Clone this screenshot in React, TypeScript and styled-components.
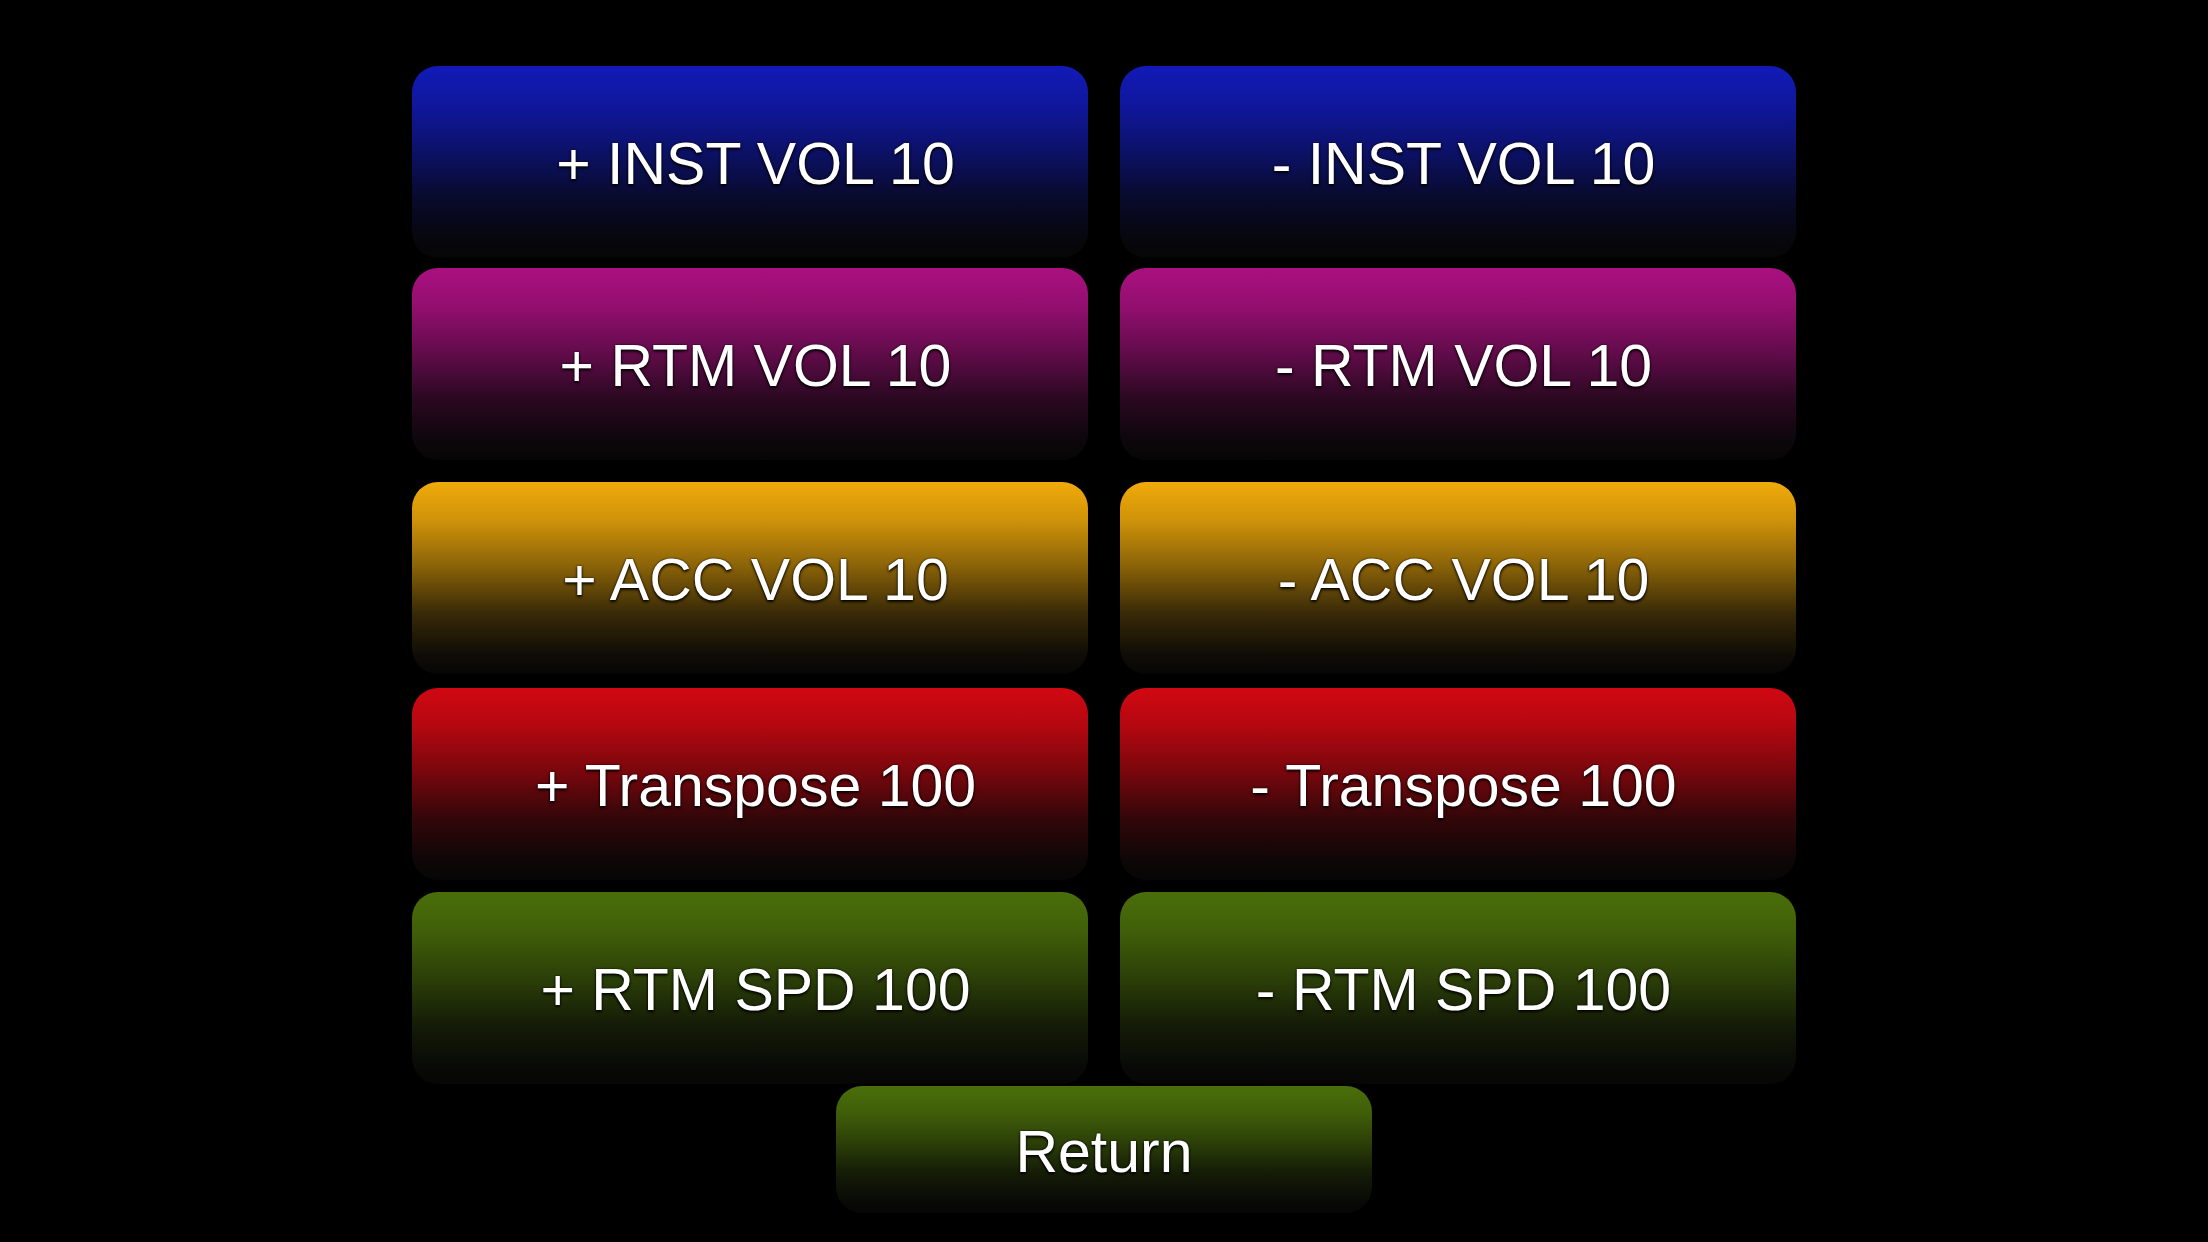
import React from "react";
import styled, { createGlobalStyle } from "styled-components";

const Global = createGlobalStyle`
  html, body {
    margin: 0;
    padding: 0;
    background: #000;
  }
  body {
    width: 2208px;
    height: 1242px;
    overflow: hidden;
    font-family: "Liberation Sans", Arial, Helvetica, sans-serif;
  }
`;

const Screen = styled.main`
  width: 2208px;
  height: 1242px;
  background: #000;
  display: flex;
  flex-direction: column;
  align-items: center;
  padding-top: 66px;
  box-sizing: border-box;
`;

const Row = styled.div<{ $gap: number }>`
  display: grid;
  grid-template-columns: 676px 676px;
  column-gap: 32px;
  margin-top: ${(p) => p.$gap}px;
`;

const Key = styled.button<{
  $rgb: string;
  $w?: number;
  $h?: number;
  $gap?: number;
  $indent?: number;
}>`
  width: ${(p) => (p.$w ? `${p.$w}px` : "100%")};
  height: ${(p) => p.$h ?? 192}px;
  margin-top: ${(p) => p.$gap ?? 0}px;
  border: none;
  border-radius: 26px;
  padding: 5px 0 0 ${(p) => p.$indent ?? 0}px;
  box-sizing: border-box;
  display: flex;
  align-items: center;
  justify-content: center;
  background-color: #060606;
  background-image: linear-gradient(
    to bottom,
    rgba(${(p) => p.$rgb}, 1) 0%,
    rgba(${(p) => p.$rgb}, 0.86) 20%,
    rgba(${(p) => p.$rgb}, 0.55) 45%,
    rgba(${(p) => p.$rgb}, 0.22) 68%,
    rgba(${(p) => p.$rgb}, 0.04) 90%,
    rgba(${(p) => p.$rgb}, 0) 100%
  );
  box-shadow: 0 4px 8px rgba(0, 0, 0, 0.6);
  color: #fff;
  font-family: "Liberation Sans", Arial, Helvetica, sans-serif;
  font-size: 59px;
  font-weight: 400;
  line-height: 1;
  white-space: pre;
  text-shadow: 0 0 2px rgba(0, 0, 0, 0.95), 0 2px 3px rgba(0, 0, 0, 0.9);
  cursor: pointer;
`;

const BLUE = "17, 26, 182";
const MAGENTA = "170, 16, 128";
const ORANGE = "240, 170, 10";
const RED = "208, 8, 18";
const GREEN = "74, 110, 10";

const rows = [
  { rgb: BLUE, gap: 0, left: "+ INST VOL 10", right: "- INST VOL 10" },
  { rgb: MAGENTA, gap: 10, left: "+ RTM VOL 10", right: "- RTM VOL 10" },
  { rgb: ORANGE, gap: 22, left: "+ ACC VOL 10", right: "- ACC VOL 10" },
  { rgb: RED, gap: 14, left: "+ Transpose 100", right: "- Transpose 100" },
  { rgb: GREEN, gap: 12, left: "+ RTM SPD 100", right: "- RTM SPD 100" },
];

export default function App() {
  return (
    <>
      <Global />
      <Screen>
        {rows.map((r) => (
          <Row key={r.left} $gap={r.gap}>
            <Key $rgb={r.rgb} $indent={11}>
              {r.left}
            </Key>
            <Key $rgb={r.rgb} $indent={11}>
              {r.right}
            </Key>
          </Row>
        ))}
        <Key $rgb={GREEN} $w={536} $h={127} $gap={2}>
          Return
        </Key>
      </Screen>
    </>
  );
}
